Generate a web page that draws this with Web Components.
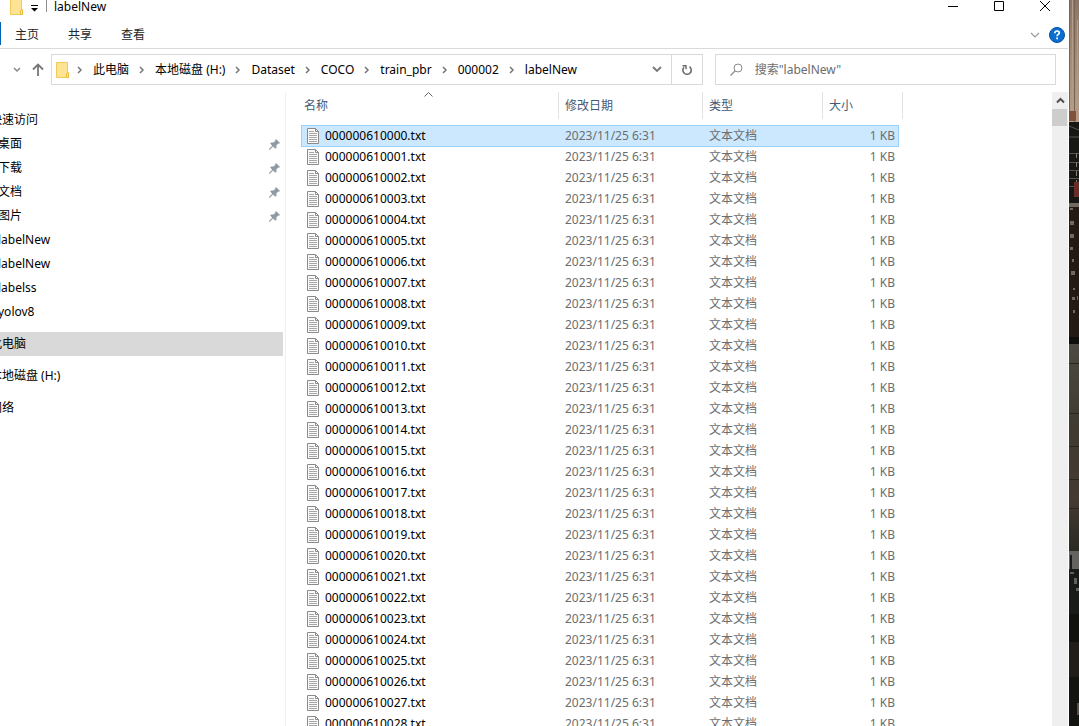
<!DOCTYPE html>
<html lang="zh-CN">
<head>
<meta charset="utf-8">
<title>labelNew</title>
<style>
html, body { height: 100%; margin: 0; }
body {
  overflow: hidden;
  font: 12px/16px "Noto Sans", "Noto Sans CJK SC", sans-serif;
  color: #000;
}
</style>
</head>
<body>
<explorer-desktop>
  <explorer-window>
    <title-bar slot="title">labelNew</title-bar>
    <ribbon-tabs slot="ribbon"></ribbon-tabs>
    <address-bar slot="address"></address-bar>
    <nav-pane slot="nav">
      <nav-item root>快速访问</nav-item>
      <nav-item pinned>桌面</nav-item>
      <nav-item pinned>下载</nav-item>
      <nav-item pinned>文档</nav-item>
      <nav-item pinned>图片</nav-item>
      <nav-item>labelNew</nav-item>
      <nav-item>labelNew</nav-item>
      <nav-item>labelss</nav-item>
      <nav-item>yolov8</nav-item>
      <nav-item root spaced current>此电脑</nav-item>
      <nav-item root spaced>本地磁盘 (H:)</nav-item>
      <nav-item root spaced>网络</nav-item>
    </nav-pane>
    <file-list slot="files"></file-list>
    <scroll-track slot="scroll"></scroll-track>
  </explorer-window>
  <wall-paper slot="wallpaper"></wall-paper>
</explorer-desktop>

<script>
const BASE = `
  *, *::before { box-sizing: border-box; }
  button { font: inherit; color: inherit; background: none; border: 0; padding: 0; margin: 0; }
  a { color: inherit; text-decoration: none; }
  svg { display: block; flex: none; }
`;

const FOLDER = `<svg width="14" height="16" viewBox="0 0 14 16" aria-hidden="true">
  <path d="M.5 .5h11v12.500h1v2.500H.5z" fill="#ffe394" stroke="#f2cb55"/>
  <path d="M10.500 15.500V12l1-1.500h1v5z" fill="#ffe9a8" stroke="#e9bd42"/></svg>`;

function define(name, markup, setup) {
  const template = document.createElement('template');
  template.innerHTML = markup.replace('<style>', '<style>' + BASE);
  customElements.define(name, class extends HTMLElement {
    constructor() {
      super();
      this.attachShadow({ mode: 'open' }).append(template.content.cloneNode(true));
      if (setup) setup(this.shadowRoot, this);
    }
  });
}

define('explorer-desktop', `<style>
  :host { display: grid; grid-template-columns: minmax(0, 1fr) 10px; height: 100vh; overflow: hidden; }
</style><slot></slot><slot name="wallpaper"></slot>`);

define('explorer-window', `<style>
  :host { display: flex; flex-direction: column; min-height: 0; background: #fff; padding-right: 1px; overflow: hidden; }
  main { flex: 1; min-height: 0; display: grid; grid-template-columns: 286px minmax(0, 1fr) 16px; grid-template-rows: minmax(0, 1fr); padding-top: 7px; }
</style>
<slot name="title"></slot><slot name="ribbon"></slot><slot name="address"></slot>
<main><slot name="nav"></slot><slot name="files"></slot><slot name="scroll"></slot></main>`);

define('title-bar', `<style>
  :host { display: flex; align-items: flex-start; height: 21px; padding-left: 10px; line-height: 14px; }
  .folder { height: 15px; overflow: hidden; display: flex; align-items: flex-end; }
  .menu { padding: 4px 0 0 6px; }
  .rule { width: 1px; height: 12px; background: #8c8c8c; margin: 0 7px 0 8px; }
  .name { flex: 1; }
  .controls { display: flex; }
  .controls button { width: 46px; height: 11px; display: flex; justify-content: center; }
</style>
<span class="folder">${FOLDER}</span>
<button class="menu" aria-label="自定义快速访问工具栏"><svg width="8" height="8" viewBox="0 0 8 8"><path d="M1 1h7v1H1zM1 4h7L4.500 7.500z"/></svg></button>
<span class="rule"></span>
<span class="name"><slot></slot></span>
<span class="controls">
<button aria-label="最小化"><svg width="10" height="11" viewBox="0 0 10 11"><path d="M0 6h10v1H0z"/></svg></button>
<button aria-label="最大化"><svg width="10" height="11" viewBox="0 0 10 11"><path d="M.5 1.500h9v9h-9z" fill="none" stroke="#000"/></svg></button>
<button aria-label="关闭"><svg width="10" height="11" viewBox="0 0 10 11"><path d="M0 1l10 10M10 1L0 11" stroke="#000"/></svg></button>
</span>`);

define('ribbon-tabs', `<style>
  :host { display: flex; align-items: center; height: 27px; border-bottom: 1px solid #dadada; padding-right: 3px; color: #262626; }
  .file { width: 1px; align-self: stretch; margin: 1px 0 3px; background: #0063b1; }
  nav { flex: 1; display: flex; gap: 29px; padding-left: 14px; }
  .fold { padding: 0 9px; }
</style>
<span class="file"></span>
<nav><button>主页</button><button>共享</button><button>查看</button></nav>
<button class="fold" aria-label="展开功能区"><svg width="10" height="6" viewBox="0 0 10 6"><path d="M1 1l4 4 4-4" fill="none" stroke="#999" stroke-width="1.200"/></svg></button>
<button aria-label="帮助"><svg width="16" height="16" viewBox="0 0 16 16"><circle cx="8" cy="8" r="7.500" fill="#0a6fd0" stroke="#0a509c"/><path d="M5.800 6.200C5.900 4.700 6.700 4 8.100 4c1.300 0 2.200.7 2.200 1.800 0 1.700-2.200 1.600-2.200 3.500" fill="none" stroke="#fff" stroke-width="1.700"/><path d="M7.200 10.500h1.800v1.800H7.200z" fill="#fff"/></svg></button>`);

define('address-bar', `<style>
  :host { display: flex; padding: 5px 12px 0 0; }
  .history { display: flex; align-items: center; width: 51px; padding-left: 13px; gap: 11px; }
  .path, .search { display: flex; align-items: center; height: 31px; border: 1px solid #d9d9d9; }
  .path { flex: 645 1 0; padding-left: 4px; min-width: 0; }
  ol { flex: 1; display: flex; list-style: none; margin: 0; padding: 0; min-width: 0; overflow: hidden; white-space: nowrap; }
  li { display: flex; align-items: center; }
  li svg { margin: 0 10px; }
  li:first-child svg { margin-left: 7px; }
  .drop { width: 28px; height: 29px; display: grid; place-items: center; }
  .refresh { width: 31px; height: 29px; border-left: 1px solid #d9d9d9; display: grid; place-items: center; }
  .search { flex: 325 1 0; margin-left: 12px; padding-left: 14px; min-width: 0; }
  input { flex: 1; min-width: 0; border: 0; outline: 0; padding: 0; margin-left: 12px; font: inherit; color: #000; background: none; }
  input::placeholder { color: #6d6d6d; opacity: 1; }
</style>
<div class="history">
<button aria-label="最近浏览的位置"><svg width="8" height="6" viewBox="0 0 8 6"><path d="M1 1l3 3 3-3" fill="none" stroke="#888" stroke-width="1.500"/></svg></button>
<button aria-label="上移"><svg width="12" height="13" viewBox="0 0 12 13"><path d="M6 13V1.500M1 6.500l5-5 5 5" fill="none" stroke="#777" stroke-width="1.800"/></svg></button>
</div>
<div class="path">${FOLDER}<ol></ol>
<button class="drop" aria-label="以前的位置"><svg width="10" height="7" viewBox="0 0 10 7"><path d="M1 1l4 4 4-4" fill="none" stroke="#777" stroke-width="1.800"/></svg></button>
<button class="refresh" aria-label="刷新"><svg width="12" height="12" viewBox="0 0 12 12"><path d="M8.500 2.700A4.200 4.200 0 1 1 3 3.200" fill="none" stroke="#6b6b6b" stroke-width="1.600"/><path d="M1.500 1h4.200v4.200H4.300V2.500H1.500z" fill="#6b6b6b"/></svg></button>
</div>
<label class="search"><svg width="13" height="13" viewBox="0 0 13 13" aria-hidden="true"><circle cx="8" cy="5" r="4" fill="none" stroke="#8a8a8a"/><path d="M5 8l-4.500 4.500" stroke="#8a8a8a" stroke-width="1.200"/></svg><input type="text" aria-label="搜索" placeholder='搜索"labelNew"'></label>`,
root => {
  root.querySelector('ol').innerHTML = ['此电脑', '本地磁盘 (H:)', 'Dataset', 'COCO', 'train_pbr', '000002', 'labelNew']
    .map(name => `<li><svg width="6" height="8" viewBox="0 0 6 8" aria-hidden="true"><path d="M1 1l3 3-3 3" fill="none" stroke="#777" stroke-width="1.500"/></svg><a href="#">${name}</a></li>`).join('');
});

define('nav-pane', `<style>
  :host { display: block; border-right: 1px solid #f0f0f0; padding: 16px 2px 0 0; overflow: hidden; }
</style><nav><slot></slot></nav>`);

define('nav-item', `<style>
  :host { display: block; }
  :host([spaced]) { margin-top: 8px; }
  a { display: flex; align-items: center; justify-content: space-between; height: 24px; padding-right: 3px; white-space: nowrap; }
  :host([current]) a { background: #d9d9d9; }
  .text { margin-left: -2px; }
  :host([root]) .text { margin-left: -10px; }
  svg { display: none; }
  :host([pinned]) svg { display: block; }
</style>
<a href="#"><span class="text"><slot></slot></span><svg width="11" height="11" viewBox="0 0 11 11" aria-hidden="true"><path d="M7 0l4 4-1 .8-.8-.2-1.900 2 .2 2.200-1 1L4 7.500.8 10.700H0V10l3.200-3.300L1.200 4.500l1-1 2.300.1 2-1.900L6.200 1z" fill="#8e9aa5"/></svg></a>`);

define('file-list', `<style>
  :host { display: block; overflow: hidden; padding-left: 15px; }
  table { table-layout: fixed; width: 602px; border-spacing: 0; }
  th { padding: 0 0 6px; font-weight: 400; text-align: left; color: #435a75; position: relative; }
  th span { display: block; height: 27px; line-height: 27px; padding-left: 6px; border-right: 1px solid #e2e2e2; }
  th:first-child span { padding-left: 3px; }
  .sort { position: absolute; top: 0; left: 50%; margin-left: -6px; }
  td { height: 21px; padding: 0 0 0 6px; white-space: nowrap; color: #6d6d6d; }
  td:first-child { color: #000; }
  .file { display: flex; align-items: center; gap: 6px; }
  td:nth-child(4) { padding: 0 4px 0 0; text-align: right; }
  .selected td { background: #cce8ff; box-shadow: 0 1px #99d1ff, inset 0 1px #99d1ff; }
  .selected td:first-child { box-shadow: 0 1px #99d1ff, inset 1px 1px #99d1ff; }
  .selected td:last-child { box-shadow: 0 1px #99d1ff, inset -1px 1px #99d1ff; }
</style>
<table>
<colgroup><col style="width:258px"><col style="width:144px"><col style="width:120px"><col style="width:76px"><col style="width:4px"></colgroup>
<thead><tr>
<th aria-sort="ascending"><svg class="sort" width="9" height="5" viewBox="0 0 9 5" aria-hidden="true"><path d="M.5 4.500l4-4 4 4" fill="none" stroke="#666"/></svg><span>名称</span></th>
<th><span>修改日期</span></th><th><span>类型</span></th><th colspan="2"><span>大小</span></th>
</tr></thead>
<tbody></tbody>
</table>`,
root => {
  const icon = `<svg width="12" height="16" viewBox="0 0 12 16" aria-hidden="true"><path d="M.5 .5h8l3 3v12H.5z" fill="#fafafa" stroke="#8a8a8a"/><path d="M8.500 .5v3h3" fill="none" stroke="#8a8a8a"/><path d="M2 3.500h5M2 5.500h8M2 7.500h8M2 9.500h8M2 11.500h8M2 13.500h8" stroke="#a6a6a6"/></svg>`;
  root.querySelector('tbody').innerHTML = Array.from({ length: 29 }, (_, i) =>
    `<tr${i ? '' : ' class="selected"'}><td><div class="file">${icon}<span>${String(610000 + i).padStart(12, '0')}.txt</span></div></td><td>2023/11/25 6:31</td><td>文本文档</td><td>1 KB</td></tr>`).join('');
});

define('scroll-track', `<style>
  :host { display: flex; flex-direction: column; background: #efefef; }
  button { height: 17px; display: grid; place-items: center; }
  .thumb { height: 17px; margin-right: 1px; background: #cdcdcd; }
</style>
<button aria-label="向上滚动"><svg width="9" height="7" viewBox="0 0 9 7"><path d="M1 5.500L4.500 2 8 5.500" fill="none" stroke="#505050" stroke-width="2"/></svg></button>
<div class="thumb"></div>`);

define('wall-paper', `<style>
  :host { display: block; overflow: hidden; background: #1d1a16; }
</style>
<svg width="10" height="726" viewBox="0 0 10 726" aria-hidden="true">
<defs><linearGradient id="sky" x2="0" y2="1"><stop offset="0" stop-color="#8a7566"/><stop offset=".5" stop-color="#a58c78"/><stop offset="1" stop-color="#b69e88"/></linearGradient>
<linearGradient id="wall" x2="0" y2="1"><stop offset="0" stop-color="#4c4a42"/><stop offset=".4" stop-color="#403a31"/><stop offset=".75" stop-color="#443a32"/><stop offset="1" stop-color="#292922"/></linearGradient></defs>
<path fill="url(#sky)" d="M0 0h10v122H0z"/>
<path fill="#756558" d="M0 0h1v112H0zM5 0h1v122H5z"/><path fill="#b39b85" d="M3 0h1v112H3zM8 20h1v100H8z"/>
<path fill="#80523a" d="M0 111h7v10H0z"/><path fill="#171813" d="M0 122h10v81H0z"/>
<path stroke="#55554d" d="M0 126l10 4M0 137h10M0 153.500h10M0 162.500h10M0 170.500h10M0 178.500h10M0 186.500h10"/>
<path stroke="#898078" stroke-dasharray="5 4" d="M7.500 153v35"/>
<path fill="#6b2d27" d="M5 182h5v15H5z"/><path fill="#716a61" d="M0 203h10v4H0z"/>
<path fill="#241a14" d="M0 207h10v130H0z"/>
<path fill="#71695f" d="M1 208h3v2H1zM1 221h4v4H1zM1 234h4v4H1zM1 247h3v3H1zM3 259h2v3H3zM2 271h4v4H2zM4 288h2v2H4zM3 297h3v3H3zM8 296h1v4H8zM4 310h2v3H4z"/>
<path fill="#0e0e0b" d="M0 337h10v7H0z"/><path fill="url(#wall)" d="M0 344h10v207H0z"/>
<path stroke="#29251f" d="M0 413.500h10M0 446.500h10M0 479.500h10M0 508.500h10M0 363.500h10"/>
<path fill="#65635f" d="M0 551h10v18H0z"/><path fill="#191b18" d="M0 569h10v45H0zM1 555h2v14H1z"/>
<path fill="#5d605c" d="M1 572h4v2H1zM5 578h3v6H5zM7 588h3v3H7z"/>
<path fill="#11110e" d="M0 614h10v28H0z"/><path fill="#211e19" d="M0 642h10v35H0z"/><path fill="#131410" d="M0 677h10v49H0z"/><path fill="#555046" d="M8 703h2v12H8z"/>
</svg>`);
</script>
</body>
</html>
